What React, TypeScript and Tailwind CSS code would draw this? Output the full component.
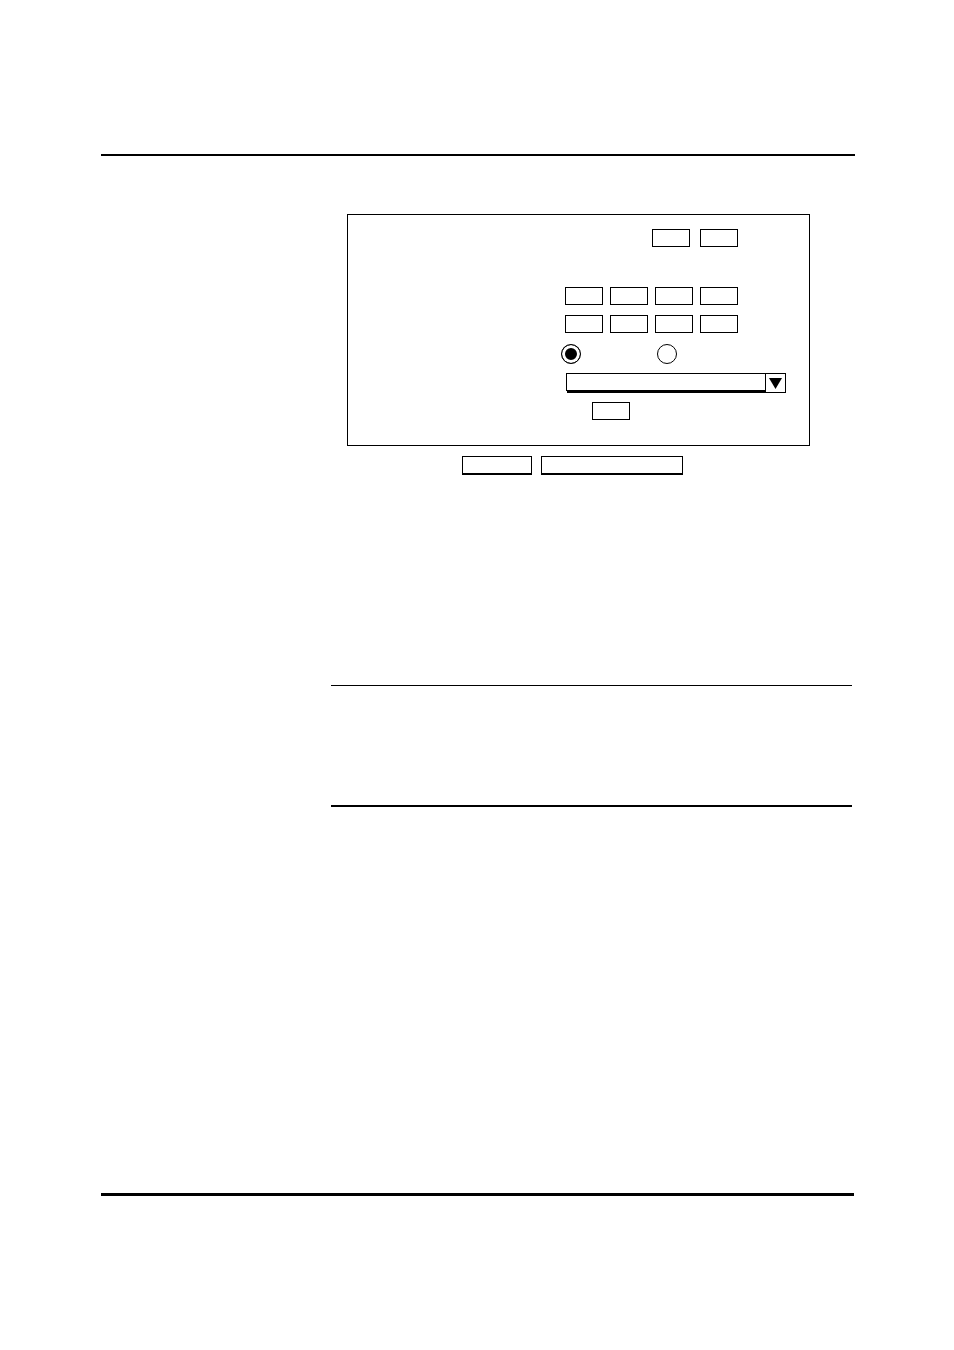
import { useState } from 'react';

const fieldClass =
  'block h-[18px] w-[38px] border border-black bg-white px-1 text-center text-xs text-black outline-none';
const radioClass =
  'block size-5 appearance-none rounded-full border border-black bg-white checked:bg-black checked:shadow-[inset_0_0_0_3px_#fff]';

function Field({ label }: { label: string }) {
  return <input type="text" aria-label={label} className={fieldClass} />;
}

function OctetRow({ label }: { label: string }) {
  return (
    <div role="group" aria-label={label} className="flex gap-[7px]">
      {[1, 2, 3, 4].map((n) => (
        <Field key={n} label={`${label}, part ${n}`} />
      ))}
    </div>
  );
}

function SettingsForm() {
  const [mode, setMode] = useState('first');

  return (
    <form onSubmit={(e) => e.preventDefault()} className="mr-[45px] ml-[246px]">
      <div className="flex flex-col border border-black pt-[14px] pb-[25px] pl-[217px]">
        <div className="flex gap-[10px] pl-[87px]">
          <Field label="Range start" />
          <Field label="Range end" />
        </div>
        <div className="mt-10 flex flex-col gap-[10px]">
          <OctetRow label="First address" />
          <OctetRow label="Second address" />
        </div>
        <div role="radiogroup" aria-label="Mode" className="mt-[11px] -ml-1 flex gap-[76px]">
          {['first', 'second'].map((value) => (
            <input
              key={value}
              type="radio"
              name="mode"
              value={value}
              aria-label={`Mode ${value}`}
              checked={mode === value}
              onChange={() => setMode(value)}
              className={radioClass}
            />
          ))}
        </div>
        <div className="relative mt-[9px] mr-[23px] ml-px pr-px">
          <select
            aria-label="Type"
            className="block h-[18px] w-full appearance-none border border-black bg-white px-1 text-xs text-black shadow-[1px_2px_0_#000] outline-none"
          >
            <option value="" aria-label="None" />
          </select>
          <span className="pointer-events-none absolute top-0 right-0 flex h-5 w-[21px] items-center justify-center border border-black bg-white">
            <svg viewBox="0 0 13 11" className="h-[11px] w-[13px]" aria-hidden="true">
              <path d="M0 0H13L6.5 11Z" fill="#000" />
            </svg>
          </span>
        </div>
        <div className="mt-[11px] ml-[27px]">
          <Field label="Value" />
        </div>
      </div>
      <div className="mt-[10px] ml-[115px] flex gap-[9px]">
        <button
          type="submit"
          aria-label="Submit"
          className="h-[18px] w-[70px] border border-black bg-white shadow-[0_1px_0_#000]"
        />
        <button
          type="reset"
          aria-label="Restore values"
          className="h-[18px] w-[142px] border border-black bg-white shadow-[0_1px_0_#000]"
        />
      </div>
    </form>
  );
}

export default function App() {
  return (
    <div className="min-h-screen bg-white pt-[154px] pr-[99px] pb-[154px] pl-[101px] font-['Liberation_Sans',sans-serif] text-black">
      <header className="border-t-2 border-black" />
      <main className="pt-[58px]">
        <SettingsForm />
        <section className="mt-[211px] mr-[3px] ml-[230px] h-[122px] border-t border-b-2 border-black" />
      </main>
      <footer className="mt-[386px] mr-px border-t-3 border-black" />
    </div>
  );
}
